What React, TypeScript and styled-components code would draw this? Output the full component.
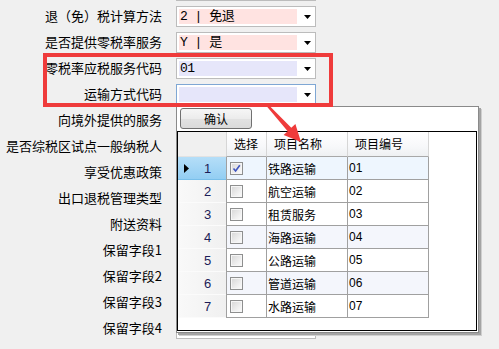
import React from 'react';
import styled, { createGlobalStyle } from 'styled-components';

const GlobalStyle = createGlobalStyle`
  html, body { margin: 0; padding: 0; }
  body {
    background: #f0f0f0;
    width: 499px;
    height: 349px;
    overflow: hidden;
    font-family: "Noto Sans CJK SC", sans-serif;
  }
`;

const Screen = styled.div`
  position: relative;
  width: 499px;
  height: 349px;
  overflow: hidden;
  background: #f0f0f0;
`;

const Form = styled.div`
  display: flex;
  flex-direction: column;
  margin-top: -23px;
`;

const FieldRow = styled.div`
  display: grid;
  grid-template-columns: 162px 140px;
  column-gap: 14px;
  height: 26px;
  flex: none;
`;

const Label = styled.div`
  font-size: 13px;
  line-height: 26px;
  text-align: right;
  white-space: nowrap;
  color: #000;
`;

const Combo = styled.div<{ $focused?: boolean }>`
  margin-top: 3px;
  height: 21px;
  box-sizing: border-box;
  border: 1px solid ${p => (p.$focused ? '#7fa7d4' : '#bcbcbc')};
  background: #fff;
  display: flex;
  padding: 2px 0 2px 2px;
`;

type Tone = 'pink' | 'lavender' | 'none';

const ComboField = styled.div<{ $tone: Tone }>`
  width: 118px;
  flex: none;
  box-sizing: border-box;
  padding-left: 1px;
  background: ${p => (p.$tone === 'pink' ? '#ffe3e1' : p.$tone === 'lavender' ? '#e6e6fa' : '#fff')};
  font-family: "Liberation Mono", "Noto Sans CJK SC", monospace;
  font-size: 13px;
  letter-spacing: -0.5px;
  line-height: 15px;
  white-space: nowrap;
  color: #000;
`;

const ComboButton = styled.div`
  flex: 1;
  display: flex;
  align-items: center;
  justify-content: center;
  padding-left: 2px;
`;

const Dropdown = styled.div`
  position: absolute;
  left: 176px;
  top: 106px;
  width: 303px;
  height: 227px;
  box-sizing: border-box;
  border: 1px solid #8a8a8a;
  padding: 0 1px 1px 0;
  background: #fff;
  box-shadow: 2px 2px 0 #a4a4a4, 3px 3px 0 #cfcfcf;
  display: flex;
  flex-direction: column;
`;

const TopBar = styled.div`
  height: 24px;
  flex: none;
  display: flex;
  align-items: flex-start;
  padding: 1px 0 0 3px;
  box-sizing: border-box;
`;

const Button = styled.button`
  width: 72px;
  height: 21px;
  box-sizing: border-box;
  border: 1px solid #707070;
  border-radius: 3px;
  background: linear-gradient(#f6f6f6, #ececec 50%, #e2e2e2 51%, #dadada);
  font-family: "Noto Sans CJK SC", sans-serif;
  font-size: 12px;
  line-height: 17px;
  padding: 0;
  color: #000;
`;

const Grid = styled.div`
  width: 300px;
  height: 200px;
  box-sizing: border-box;
  border: 1px solid #000;
  background: #fff;
  overflow: hidden;
  display: flex;
  flex-direction: column;
`;

const HeaderRow = styled.div`
  display: flex;
  height: 25px;
  flex: none;
`;

const Corner = styled.div`
  width: 48px;
  flex: none;
  background: #f0f0f0;
  border-bottom: 1px solid #e2e2e2;
  box-sizing: border-box;
`;

const ColHead = styled.div<{ $w: number; $first?: boolean }>`
  width: ${p => p.$w}px;
  flex: none;
  box-sizing: border-box;
  border-right: 1px solid #d6d6d6;
  border-left: ${p => (p.$first ? '1px solid #d6d6d6' : 'none')};
  border-bottom: 1px solid #a8a8a8;
  background: linear-gradient(#ffffff, #f7f8fa 60%, #eef0f2);
  font-size: 12px;
  line-height: 24px;
  padding-left: 7px;
  white-space: nowrap;
  color: #000;
`;

const DataRow = styled.div`
  display: flex;
  height: 23px;
  flex: none;
`;

const RowHead = styled.div<{ $selected?: boolean }>`
  width: 48px;
  flex: none;
  box-sizing: border-box;
  display: flex;
  align-items: center;
  padding-left: 6px;
  background: ${p =>
    p.$selected ? 'linear-gradient(#b5def8, #93cef3)' : 'linear-gradient(to right, #f9f9f9, #f0f0f0)'};
  border-bottom: 1px solid ${p => (p.$selected ? '#79bfea' : '#fbfbfb')};
`;

const Marker = styled.span`
  width: 5px;
  height: 9px;
  flex: none;
  display: flex;
`;

const RowNum = styled.span`
  flex: 1;
  text-align: center;
  font-family: "Liberation Sans", sans-serif;
  font-size: 13px;
  color: #1c1c58;
`;

type RowTone = 'selected' | 'alt' | 'plain';

const Cell = styled.div<{ $w: number; $tone: RowTone; $first?: boolean; $latin?: boolean }>`
  width: ${p => p.$w}px;
  flex: none;
  box-sizing: border-box;
  border-right: 1px solid #a0a0a0;
  border-left: ${p => (p.$first ? '1px solid #a0a0a0' : 'none')};
  border-bottom: 1px solid #a0a0a0;
  background: ${p => (p.$tone === 'selected' ? '#eef6fe' : p.$tone === 'alt' ? '#f4f6fc' : '#fff')};
  display: flex;
  align-items: center;
  padding-left: ${p => (p.$first ? '3px' : '1px')};
  font-family: ${p => (p.$latin ? '"Liberation Sans", sans-serif' : '"Noto Sans CJK SC", sans-serif')};
  font-size: 12px;
  white-space: nowrap;
  color: #000;
`;

const CheckBox = styled.span`
  width: 13px;
  height: 13px;
  box-sizing: border-box;
  border: 1px solid #8e8f8f;
  background: linear-gradient(135deg, #d6d6d6, #f2f2f2 70%, #fbfbfb);
  box-shadow: inset 0 0 0 1px #f6f6f6;
  display: flex;
  align-items: center;
  justify-content: center;
`;

const RedFrame = styled.div`
  position: absolute;
  left: 43px;
  top: 53px;
  width: 290px;
  height: 54px;
  box-sizing: border-box;
  border: 4px solid #ef3b3b;
  pointer-events: none;
`;

const ArrowSvg = styled.svg`
  position: absolute;
  left: 262px;
  top: 100px;
  overflow: visible;
  pointer-events: none;
`;

interface Field {
  label: string;
  value: string;
  tone: Tone;
  focused?: boolean;
}

const fields: Field[] = [
  { label: '', value: '', tone: 'none' },
  { label: '退（免）税计算方法', value: '2 | 免退', tone: 'pink' },
  { label: '是否提供零税率服务', value: 'Y | 是', tone: 'pink' },
  { label: '零税率应税服务代码', value: '01', tone: 'lavender' },
  { label: '运输方式代码', value: '', tone: 'lavender', focused: true },
  { label: '向境外提供的服务', value: '', tone: 'none' },
  { label: '是否综税区试点一般纳税人', value: '', tone: 'none' },
  { label: '享受优惠政策', value: '', tone: 'none' },
  { label: '出口退税管理类型', value: '', tone: 'none' },
  { label: '附送资料', value: '', tone: 'none' },
  { label: '保留字段1', value: '', tone: 'none' },
  { label: '保留字段2', value: '', tone: 'none' },
  { label: '保留字段3', value: '', tone: 'none' },
  { label: '保留字段4', value: '', tone: 'none' },
];

const items = [
  { name: '铁路运输', code: '01', checked: true },
  { name: '航空运输', code: '02' },
  { name: '租赁服务', code: '03' },
  { name: '海路运输', code: '04' },
  { name: '公路运输', code: '05' },
  { name: '管道运输', code: '06' },
  { name: '水路运输', code: '07' },
];

const toneFor = (i: number): RowTone => (i === 0 ? 'selected' : i === 3 || i === 5 ? 'alt' : 'plain');

const DownArrow = () => (
  <svg width="7" height="4" viewBox="0 0 7 4">
    <polygon points="0,0 7,0 3.5,4" fill="#000" />
  </svg>
);

export default function App() {
  return (
    <Screen>
      <GlobalStyle />
      <Form>
        {fields.map((f, i) => (
          <FieldRow key={i}>
            <Label>{f.label}</Label>
            <Combo $focused={f.focused}>
              <ComboField $tone={f.tone}>{f.value}</ComboField>
              <ComboButton>
                <DownArrow />
              </ComboButton>
            </Combo>
          </FieldRow>
        ))}
      </Form>

      <Dropdown>
        <TopBar>
          <Button>确认</Button>
        </TopBar>
        <Grid>
          <HeaderRow>
            <Corner />
            <ColHead $w={41} $first>选择</ColHead>
            <ColHead $w={81}>项目名称</ColHead>
            <ColHead $w={81}>项目编号</ColHead>
          </HeaderRow>
          {items.map((it, i) => (
            <DataRow key={it.code}>
              <RowHead $selected={i === 0}>
                <Marker>
                  {i === 0 && (
                    <svg width="5" height="9" viewBox="0 0 5 9">
                      <polygon points="0,0 5,4.5 0,9" fill="#000" />
                    </svg>
                  )}
                </Marker>
                <RowNum>{i + 1}</RowNum>
              </RowHead>
              <Cell $w={41} $tone={toneFor(i)} $first>
                <CheckBox>
                  {it.checked && (
                    <svg width="9" height="9" viewBox="0 0 9 9">
                      <path d="M1.5 4.5 L3.6 7 L7.8 1.2" stroke="#3f55c0" strokeWidth="1.6" fill="none" />
                    </svg>
                  )}
                </CheckBox>
              </Cell>
              <Cell $w={81} $tone={toneFor(i)}>{it.name}</Cell>
              <Cell $w={81} $tone={toneFor(i)} $latin>{it.code}</Cell>
            </DataRow>
          ))}
        </Grid>
      </Dropdown>

      <RedFrame />
      <ArrowSvg width="44" height="46" viewBox="0 0 44 46">
        <polygon
          points="5.1,6.8 25.7,31.2 21.6,34.9 39,42 33.4,24.1 29.3,27.8 6.9,5.2"
          fill="#ef3b3b"
        />
      </ArrowSvg>
    </Screen>
  );
}
